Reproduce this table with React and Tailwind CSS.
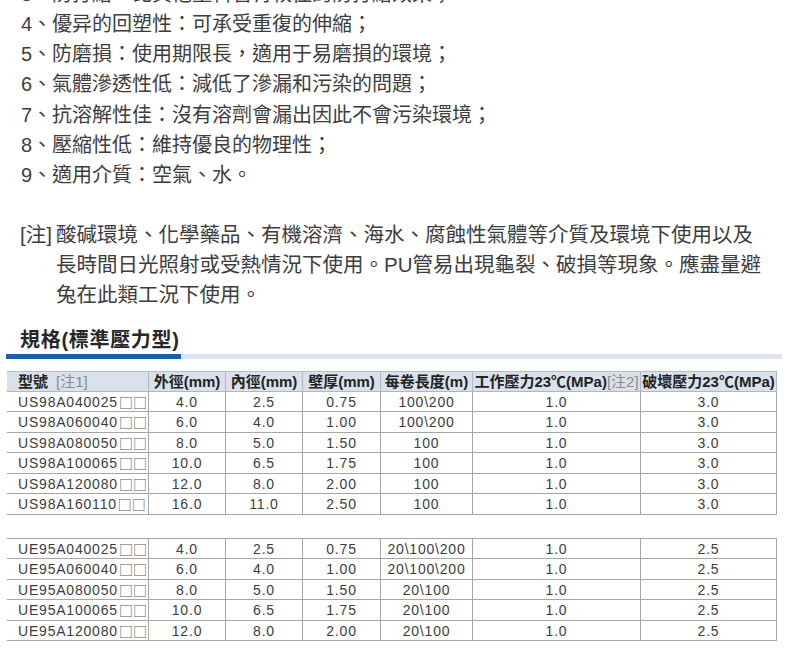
import React from "react";

const list = [
  "3、防打結：比其他塑料管有較佳的防打結效果；",
  "4、優异的回塑性：可承受重復的伸縮；",
  "5、防磨損：使用期限長，適用于易磨損的環境；",
  "6、氣體滲透性低：減低了滲漏和污染的問題；",
  "7、抗溶解性佳：沒有溶劑會漏出因此不會污染環境；",
  "8、壓縮性低：維持優良的物理性；",
  "9、適用介質：空氣、水。",
];

const t1 = [
  ["US98A040025", "4.0", "2.5", "0.75", "100\\200", "1.0", "3.0"],
  ["US98A060040", "6.0", "4.0", "1.00", "100\\200", "1.0", "3.0"],
  ["US98A080050", "8.0", "5.0", "1.50", "100", "1.0", "3.0"],
  ["US98A100065", "10.0", "6.5", "1.75", "100", "1.0", "3.0"],
  ["US98A120080", "12.0", "8.0", "2.00", "100", "1.0", "3.0"],
  ["US98A160110", "16.0", "11.0", "2.50", "100", "1.0", "3.0"],
];

const t2 = [
  ["UE95A040025", "4.0", "2.5", "0.75", "20\\100\\200", "1.0", "2.5"],
  ["UE95A060040", "6.0", "4.0", "1.00", "20\\100\\200", "1.0", "2.5"],
  ["UE95A080050", "8.0", "5.0", "1.50", "20\\100", "1.0", "2.5"],
  ["UE95A100065", "10.0", "6.5", "1.75", "20\\100", "1.0", "2.5"],
  ["UE95A120080", "12.0", "8.0", "2.00", "20\\100", "1.0", "2.5"],
];

function DataTable({ rows, top }) {
  return (
    <div
      className={
        "grid w-[770px] grid-cols-[142px_77px_77px_78px_92px_168px_136px] auto-rows-[20.5px] text-[14px] tracking-[0.8px] text-[#3d3d3d] " +
        (top ? "border-t border-[#a6a6a6]" : "")
      }
    >
      {rows.map((r, i) =>
        r.map((c, j) => (
          <div
            key={i + "-" + j}
            className={
              j === 0
                ? "flex items-center border-r border-b border-[#a6a6a6] pl-[11px] leading-none whitespace-nowrap"
                : "flex items-center justify-center border-r border-b border-[#a6a6a6] leading-none whitespace-nowrap"
            }
          >
            {c}
            {j === 0 && (
              <span className="ml-[1px] tracking-normal font-['Noto_Sans_CJK_TC',sans-serif] text-[14px] text-[#555]">
                □□
              </span>
            )}
          </div>
        ))
      )}
    </div>
  );
}

export default function App() {
  const hdr =
    "flex items-center justify-center border-r border-b border-[#aeb8c4] whitespace-nowrap";
  return (
    <div className="w-[790px] h-[650px] overflow-hidden bg-white font-['Liberation_Sans','Noto_Sans_CJK_TC',sans-serif]">
      <div className="mt-[-21.5px] pl-[21px] text-[20px] leading-[30.3px] text-[#3d3d3d]">
        {list.map((l) => (
          <div key={l} className="whitespace-nowrap">
            {l}
          </div>
        ))}
      </div>

      <div className="mt-[29.4px] flex pl-[20px] text-[20.5px] leading-[30px] text-[#3d3d3d]">
        <div className="w-[36px] shrink-0 whitespace-nowrap">[注]</div>
        <div>
          <div className="whitespace-nowrap">
            酸碱環境、化學藥品、有機溶濟、海水、腐蝕性氣體等介質及環境下使用以及
          </div>
          <div className="whitespace-nowrap">
            長時間日光照射或受熱情況下使用。PU管易出現龜裂、破損等現象。應盡量避
          </div>
          <div className="whitespace-nowrap">兔在此類工況下使用。</div>
        </div>
      </div>

      <div className="mt-[18px] pl-[20px] text-[20px] font-bold leading-[24px] tracking-[0.7px] text-[#262626]">
        規格(標準壓力型)
      </div>

      <div className="mt-[2px] ml-[6px] mr-[8px] flex h-[5px]">
        <div className="w-[175px] bg-[#1d5ea6]" />
        <div className="flex-1 bg-[#dbe4ef]" />
      </div>

      <div className="mt-[12px] ml-[7px]">
        <div className="grid h-[21px] w-[770px] grid-cols-[142px_77px_77px_78px_92px_168px_136px] border-t border-[#b3bfcc] bg-[#dae1ea] text-[15px] font-bold leading-none text-[#222]">
          <div className="flex items-center border-r border-b border-[#aeb8c4] pl-[11px] whitespace-nowrap">
            型號
            <span className="ml-[8px] font-normal text-[#8a8a8a]">[注1]</span>
          </div>
          <div className={hdr}>外徑(mm)</div>
          <div className={hdr}>內徑(mm)</div>
          <div className={hdr}>壁厚(mm)</div>
          <div className={hdr}>每卷長度(m)</div>
          <div className={hdr}>
            工作壓力23℃(MPa)
            <span className="font-normal text-[#8a8a8a]">[注2]</span>
          </div>
          <div className={hdr}>破壞壓力23℃(MPa)</div>
        </div>
        <DataTable rows={t1} />
        <div className="mt-[23px]">
          <DataTable rows={t2} top />
        </div>
      </div>
    </div>
  );
}
